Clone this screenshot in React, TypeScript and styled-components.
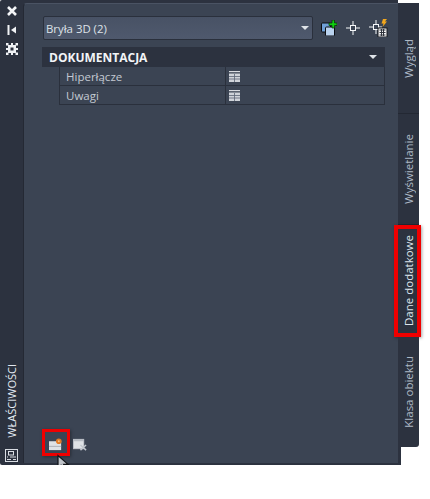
import React from "react";
import styled, { createGlobalStyle } from "styled-components";

const Global = createGlobalStyle`
  html, body { margin: 0; padding: 0; background: #fff; }
  body { font-family: "Open Sans", "Noto Sans", sans-serif; }
`;

const Frame = styled.div`
  display: flex;
  width: 430px;
  height: 465px;
  position: relative;
`;

const Strip = styled.div`
  width: 23px;
  flex: none;
  background: #2c323f;
  border-radius: 2px 0 0 2px;
  display: flex;
  flex-direction: column;
  align-items: center;
  padding: 5px 0 3px;
  box-sizing: border-box;
`;

const StripIcons = styled.div`
  display: flex;
  flex-direction: column;
  gap: 7px;
  align-items: center;
`;

const StripLabel = styled.div`
  margin-top: auto;
  writing-mode: vertical-rl;
  transform: rotate(180deg);
  color: #e6edf5;
  font-size: 11px;
  line-height: 14px;
  margin-bottom: 11px;
  white-space: nowrap;
`;

const Main = styled.div`
  width: 375px;
  flex: none;
  background: #2c323f;
  padding: 3px 0 2px;
  box-sizing: border-box;
  display: flex;
`;

const Panel = styled.div`
  flex: 1;
  background: #3b4453;
  border-left: 1px solid #242934;
  border-top: 1px solid #4a5363;
  border-radius: 4px 0 0 0;
  padding: 12px 13px 12px 18px;
  box-sizing: border-box;
  display: flex;
  flex-direction: column;
`;

const SelectRow = styled.div`
  display: flex;
  align-items: center;
  height: 24px;
`;

const Combo = styled.div`
  width: 270px;
  height: 24px;
  margin-left: 1px;
  box-sizing: border-box;
  background: linear-gradient(#485265, #4f596d);
  border: 1px solid #2a303c;
  border-radius: 2px;
  display: flex;
  align-items: center;
  justify-content: space-between;
  padding: 0 3px 0 2px;
  color: #dfe3e9;
  font-size: 11.4px;
`;

const ArrowDown = styled.span`
  width: 0;
  height: 0;
  border-left: 4px solid transparent;
  border-right: 4px solid transparent;
  border-top: 4px solid #dfe3e8;
`;

const SelectTools = styled.div`
  display: flex;
  align-items: center;
  margin-left: 8px;
  gap: 9px;
`;

const Section = styled.div`
  margin-top: 7px;
  width: 343px;
`;

const SectionHead = styled.div`
  height: 20px;
  background: #2c323f;
  display: flex;
  align-items: center;
  justify-content: space-between;
  padding: 0 8px 0 7px;
  box-sizing: border-box;
  color: #f2f4f7;
  font-size: 12px;
  font-weight: 700;
`;

const Row = styled.div`
  display: flex;
  height: 19px;
  margin-left: 17px;
  box-sizing: border-box;
  border-left: 1px solid #2a303c;
  border-right: 1px solid #2a303c;
  border-bottom: 1px solid #2a303c;
`;

const RowName = styled.div`
  width: 166px;
  box-sizing: border-box;
  padding-left: 6px;
  border-right: 1px solid #2a303c;
  color: #c4c9d2;
  font-size: 11.5px;
  line-height: 19px;
`;

const RowValue = styled.div`
  flex: 1;
  display: flex;
  align-items: center;
  padding-left: 3px;
`;

const Tools = styled.div`
  margin-top: auto;
  display: flex;
  align-items: center;
  gap: 10px;
  padding-left: 7px;
`;

const ToolButton = styled.div`
  position: relative;
  width: 14px;
  height: 13px;
  display: flex;
`;

const RedBox = styled.div`
  position: absolute;
  box-sizing: border-box;
  border: 3px solid #f00000;
  box-shadow: 1px 1px 3px rgba(0, 0, 0, 0.35);
  pointer-events: none;
`;

const ButtonMark = styled(RedBox)`
  left: -7px;
  top: -9px;
  width: 28px;
  height: 27px;
`;

const Cursor = styled.svg`
  position: absolute;
  z-index: 3;
  left: 8px;
  top: 17px;
  overflow: visible;
`;

const Tabs = styled.div`
  width: 24px;
  flex: none;
  display: flex;
  padding-top: 3px;
  box-sizing: border-box;
  align-items: flex-start;
`;

const EdgeColumn = styled.div`
  display: flex;
  flex-direction: column;
  height: 100%;
`;

const TabList = styled.div`
  width: 21px;
  height: 444px;
  display: flex;
  flex-direction: column;
  flex: none;
`;

const EdgeFoot = styled.div`
  width: 3px;
  height: 18px;
  background: #2c323f;
`;

const Tab = styled.div<{ $h: number; $last?: boolean }>`
  position: relative;
  height: ${(p) => p.$h}px;
  flex: none;
  box-sizing: border-box;
  background: #2c323f;
  border-bottom: ${(p) => (p.$last ? "none" : "1px solid #232833")};
  border-radius: ${(p) => (p.$last ? "0 0 3px 0" : "0")};
  display: flex;
  align-items: center;
  justify-content: center;
`;

const TabText = styled.span<{ $active?: boolean }>`
  writing-mode: vertical-rl;
  transform: rotate(180deg);
  color: ${(p) => (p.$active ? "#dde4ec" : "#aeb9c6")};
  font-size: 11.5px;
  line-height: 14px;
  padding-right: 1px;
  white-space: nowrap;
`;

const TabMark = styled(RedBox)`
  left: -4px;
  top: 0;
  width: 27px;
  height: 112px;
  border-width: 4px;
`;

const CloseIcon = () => (
  <svg width="12" height="12" viewBox="0 0 12 12">
    <path d="M2 2l8 8M10 2l-8 8" stroke="#f4f6f8" strokeWidth="2.6" />
  </svg>
);

const PinIcon = () => (
  <svg width="12" height="12" viewBox="0 0 12 12">
    <path d="M2.5 1v10" stroke="#f0f2f5" strokeWidth="2" />
    <path d="M5 6l5-3.5v7z" fill="#f0f2f5" />
  </svg>
);

const GearIcon = () => (
  <svg width="12" height="12" viewBox="0 0 12 12">
    <rect x="2" y="2" width="8" height="8" fill="#f0f2f5" />
    <g fill="#f0f2f5">
      <rect x="0" y="0" width="2.5" height="2.5" />
      <rect x="9.5" y="0" width="2.5" height="2.5" />
      <rect x="0" y="9.5" width="2.5" height="2.5" />
      <rect x="9.5" y="9.5" width="2.5" height="2.5" />
      <rect x="5" y="0" width="2" height="12" />
      <rect x="0" y="5" width="12" height="2" />
    </g>
    <rect x="4.5" y="4.5" width="3" height="3" fill="#2c323f" />
  </svg>
);

const PanelIcon = () => (
  <svg width="13" height="13" viewBox="0 0 13 13" fill="none" stroke="#d9dde3">
    <rect x="0.5" y="0.5" width="12" height="12" />
    <rect x="3.5" y="2.5" width="5" height="3.5" />
    <path d="M2 8h1M5 8h6M2 10.5h4M8 10.5h3" />
  </svg>
);

const QuickSelectIcon = () => (
  <svg width="16" height="16" viewBox="0 0 16 16">
    <rect x="0.5" y="3" width="9" height="9" rx="1" fill="#6f9fd6" stroke="#0c0e12" />
    <rect x="4.5" y="7" width="9" height="9" rx="1" fill="#b9d2ee" stroke="#0c0e12" />
    <path d="M11 0h2.5v3H16v2.5h-2.5V8H11V5.5H8V3h3z" fill="#0fce0f" stroke="#0c2a0c" strokeWidth="0.7" />
  </svg>
);

const PickIcon = () => (
  <svg width="14" height="14" viewBox="0 0 14 14" fill="none" stroke="#f5f7f9">
    <rect x="4.5" y="4.5" width="5" height="5" />
    <path d="M7 0v4M7 10v4M0 7h4M10 7h4" />
  </svg>
);

const PickAddIcon = () => (
  <svg width="19" height="18" viewBox="0 0 19 18" fill="none">
    <g stroke="#f5f7f9">
      <rect x="4.5" y="5.5" width="5" height="5" />
      <path d="M7 1v4M7 11v4M0 8h4M10 8h3" />
    </g>
    <path d="M14 0h4l-2 2.5h2L13.5 8l1-3.5h-2z" fill="#f2a71d" />
    <rect x="9" y="9" width="9" height="9" fill="#f5f5f5" stroke="#15171c" />
    <path d="M10.5 11h6M10.5 13.5h6M10.5 16h6M12.5 10v7M14.5 10v7" stroke="#30343c" />
  </svg>
);

const TableIcon = () => (
  <svg width="11" height="11" viewBox="0 0 11 11">
    <rect x="0" y="0" width="11" height="1.2" fill="#d9dce1" />
    <rect x="0" y="2.5" width="11" height="8.5" fill="#cfd3d9" />
    <path d="M0 5.5h11M0 8h11M5.5 3v8" stroke="#5a6374" strokeWidth="0.8" />
  </svg>
);

const AddSetIcon = () => (
  <svg width="15" height="13" viewBox="0 0 15 13">
    <rect x="0" y="3" width="13" height="9.5" fill="#dfe2e6" />
    <path d="M0 8.5h13" stroke="#a9aeb6" />
    <circle cx="10.5" cy="3" r="3" fill="#e27a26" />
    <circle cx="10.5" cy="3" r="1" fill="#f4c083" />
  </svg>
);

const RemoveSetIcon = () => (
  <svg width="15" height="13" viewBox="0 0 15 13">
    <rect x="0" y="0.5" width="12" height="11" fill="#b7bcc4" />
    <rect x="1" y="3" width="10" height="7.5" fill="#dfe2e6" />
    <path d="M8 7l6 5.5M14 7l-6 5.5" stroke="#c3c8cf" strokeWidth="1.6" />
  </svg>
);

const CursorIcon = () => (
  <Cursor width="13" height="16" viewBox="0 0 13 16">
    <path d="M1 0.5v12.5l3-2.8 2.2 5.3 2.6-1.1-2.2-5.1H11z" fill="#bfc3c9" stroke="#101216" strokeWidth="1.2" />
  </Cursor>
);

const rows = ["Hiperłącze", "Uwagi"];

export default function App() {
  return (
    <>
      <Global />
      <Frame>
        <Strip>
          <StripIcons>
            <CloseIcon />
            <PinIcon />
            <GearIcon />
          </StripIcons>
          <StripLabel>WŁAŚCIWOŚCI</StripLabel>
          <PanelIcon />
        </Strip>
        <Main>
          <Panel>
            <SelectRow>
              <Combo>
                Bryła 3D (2)
                <ArrowDown />
              </Combo>
              <SelectTools>
                <QuickSelectIcon />
                <PickIcon />
                <PickAddIcon />
              </SelectTools>
            </SelectRow>
            <Section>
              <SectionHead>
                DOKUMENTACJA
                <ArrowDown />
              </SectionHead>
              {rows.map((r) => (
                <Row key={r}>
                  <RowName>{r}</RowName>
                  <RowValue>
                    <TableIcon />
                  </RowValue>
                </Row>
              ))}
            </Section>
            <Tools>
              <ToolButton>
                <AddSetIcon />
                <ButtonMark />
                <CursorIcon />
              </ToolButton>
              <ToolButton>
                <RemoveSetIcon />
              </ToolButton>
            </Tools>
          </Panel>
        </Main>
        <Tabs>
          <EdgeColumn>
            <TabList>
              <Tab $h={111}>
                <TabText>Wygląd</TabText>
              </Tab>
              <Tab $h={111}>
                <TabText>Wyświetlanie</TabText>
              </Tab>
              <Tab $h={112}>
                <TabText $active>Dane dodatkowe</TabText>
                <TabMark />
              </Tab>
              <Tab $h={110} $last>
                <TabText>Klasa obiektu</TabText>
              </Tab>
            </TabList>
            <EdgeFoot />
          </EdgeColumn>
        </Tabs>
      </Frame>
    </>
  );
}
